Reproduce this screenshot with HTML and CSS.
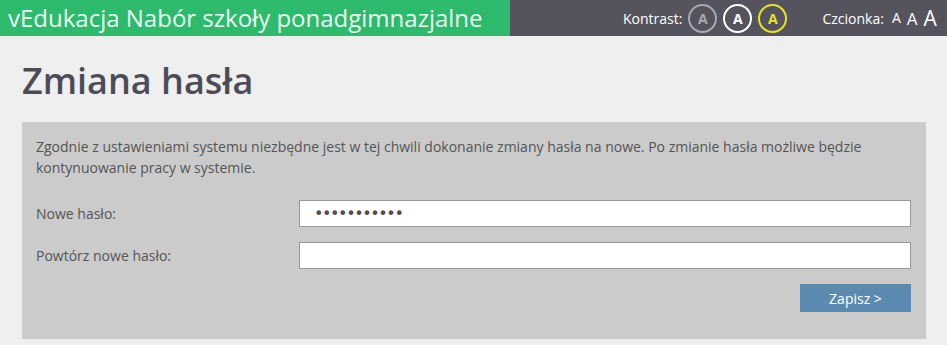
FILE: index.html
```html
<!DOCTYPE html>
<html lang="pl">
<head>
<meta charset="utf-8">
<title>Zmiana hasła</title>
<link rel="stylesheet" href="styles.css">
</head>
<body>
<header class="topbar">
  <div class="brand">vEdukacja Nabór szkoły ponadgimnazjalne</div>
  <div class="tools">
    <span class="tool-label">Kontrast:</span>
    <span class="contrast c-grey">A</span>
    <span class="contrast c-white">A</span>
    <span class="contrast c-yellow">A</span>
    <span class="tool-label font-label">Czcionka:</span>
    <span class="fsize fs-s">A</span>
    <span class="fsize fs-m">A</span>
    <span class="fsize fs-l">A</span>
  </div>
</header>
<main class="content">
  <h1 class="title">Zmiana hasła</h1>
  <section class="panel">
    <p class="info">Zgodnie z ustawieniami systemu niezbędne jest w tej chwili dokonanie zmiany hasła na nowe. Po zmianie hasła możliwe będzie kontynuowanie pracy w systemie.</p>
    <div class="form">
      <label class="label" for="p1">Nowe hasło:</label>
      <input class="field" id="p1" type="password" value="12345678901">
      <label class="label" for="p2">Powtórz nowe hasło:</label>
      <input class="field" id="p2" type="password" value="">
    </div>
    <div class="actions">
      <button class="btn" type="button">Zapisz &gt;</button>
    </div>
  </section>
</main>
</body>
</html>
```
FILE: styles.css
```css
* { box-sizing: border-box; }
html, body { margin: 0; padding: 0; }
body {
  background: #efefef;
  font-family: "Open Sans", "Noto Sans", sans-serif;
  color: #555;
}
.topbar {
  display: flex;
  height: 36px;
  background: #55545e;
}
.brand {
  width: 510px;
  background: #2dba6c;
  color: #eefaf2;
  font-size: 24px;
  line-height: 35px;
  padding-left: 8px;
  white-space: nowrap;
}
.tools {
  flex: 1;
  display: flex;
  align-items: center;
  color: #fff;
  font-size: 14px;
  padding-left: 113px;
}
.tool-label { margin-right: 5px; }
.font-label { margin-left: 29px; margin-right: 8px; }
.contrast {
  width: 29px;
  height: 29px;
  border-radius: 50%;
  border: 2px solid #fff;
  display: flex;
  align-items: center;
  justify-content: center;
  font-weight: 700;
  font-size: 14px;
  margin-right: 6px;
}
.contrast.c-grey { margin-left: 1px; }
.c-grey { border-color: #a9a9b2; color: #a9a9b2; }
.c-white { border-color: #fff; color: #fff; }
.c-yellow { border-color: #e6e61e; color: #e6e61e; }
.fsize { margin-right: 6px; line-height: 1; }
.fs-s { font-size: 14px; }
.fs-m { font-size: 17px; }
.fs-l { font-size: 21px; }
.content { padding: 0 21px 0 22px; }
.title {
  margin: 0;
  padding-top: 19px;
  height: 86px;
  font-size: 36px;
  font-weight: 600;
  line-height: 52px;
  color: #4c4c56;
}
.panel {
  background: #cbcbcb;
  padding: 14px 15px 27px 14px;
}
.info {
  margin: 0;
  font-size: 14px;
  line-height: 21px;
  color: #555;
}
.form {
  display: grid;
  grid-template-columns: 263px 1fr;
  row-gap: 15px;
  align-items: center;
  margin-top: 22px;
}
.label { font-size: 14px; color: #555; }
.field {
  height: 27px;
  border: 1px solid #9a9a9a;
  background: #fff;
  padding: 0 14px;
  font-size: 16px;
  color: #4f4f55;
  font-family: "DejaVu Sans", sans-serif;
  letter-spacing: -1.4px;
}
.actions {
  display: flex;
  justify-content: flex-end;
  margin-top: 15px;
}
.btn {
  width: 111px;
  height: 28px;
  border: 0;
  background: #5b8ab0;
  color: #fff;
  font-family: inherit;
  font-size: 14px;
}
```
